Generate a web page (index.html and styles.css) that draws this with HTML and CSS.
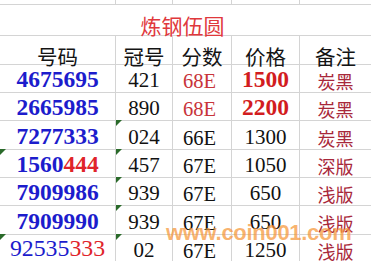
FILE: index.html
```html
<!DOCTYPE html>
<html lang="zh">
<head>
<meta charset="utf-8">
<title>炼钢伍圆</title>
<link rel="stylesheet" href="styles.css">
</head>
<body>
<div class="sheet">
  <div class="cell strip"></div><div class="cell strip"></div><div class="cell strip"></div><div class="cell strip"></div><div class="cell strip last"></div>

  <div class="cell title">炼钢伍圆</div>

  <div class="cell head">号码</div><div class="cell head">冠号</div><div class="cell head">分数</div><div class="cell head">价格</div><div class="cell head last">备注</div>

  <div class="cell num">4675695</div><div class="cell plain">421</div><div class="cell grade red">68E</div><div class="cell price hot">1500</div><div class="cell note last">炭黑</div>

  <div class="cell num">2665985</div><div class="cell plain">890</div><div class="cell grade red">68E</div><div class="cell price hot">2200</div><div class="cell note last">炭黑</div>

  <div class="cell num">7277333</div><div class="cell plain flag">024</div><div class="cell grade">66E</div><div class="cell price">1300</div><div class="cell note last">炭黑</div>

  <div class="cell num flag">1560<span class="hi">444</span></div><div class="cell plain flag">457</div><div class="cell grade">67E</div><div class="cell price">1050</div><div class="cell note last">深版</div>

  <div class="cell num">7909986</div><div class="cell plain flag">939</div><div class="cell grade">67E</div><div class="cell price">650</div><div class="cell note last">浅版</div>

  <div class="cell num">7909990</div><div class="cell plain flag">939</div><div class="cell grade">67E</div><div class="cell price">650</div><div class="cell note last">浅版</div>

  <div class="cell num thin flag end">92535<span class="hi">333</span></div><div class="cell plain flag end">02</div><div class="cell grade end">67E</div><div class="cell price end">1250</div><div class="cell note last end">浅版</div>

  <div class="watermark">www.coin001.com</div>
</div>
</body>
</html>
```
FILE: styles.css
```css
html, body {
  margin: 0;
  padding: 0;
  background: #ffffff;
}

.sheet {
  position: relative;
  width: 371px;
  height: 261px;
  overflow: hidden;
  display: grid;
  grid-template-columns: 116px 57px 59px 68px 71px;
  grid-template-rows: 5px 31px 29px 28px 28px 29px 28px 28px 29px 26px;
  font-family: "Liberation Serif", "Noto Sans CJK SC", serif;
  color: #111111;
}

.cell {
  position: relative;
  box-sizing: border-box;
  border-right: 1px solid #d4d4d4;
  border-bottom: 1px solid #d4d4d4;
  display: flex;
  align-items: flex-end;
  justify-content: center;
  white-space: nowrap;
  line-height: 1;
  padding-bottom: 1px;
}

.cell.last {
  border-right: none;
}

.strip {
  padding: 0;
}

.title {
  grid-column: 1 / 6;
  border-right: none;
  font-family: "Noto Sans CJK SC", sans-serif;
  font-size: 21px;
  line-height: 0.9;
  color: #e0383c;
  padding-bottom: 0;
  padding-right: 6px;
}

.head {
  font-family: "Noto Sans CJK SC", sans-serif;
  font-size: 20.5px;
  line-height: 0.8;
  color: #141414;
  padding-bottom: 0;
}

.num {
  font-size: 23.5px;
  font-weight: bold;
  color: #1c1ccc;
}

.num.thin {
  font-weight: normal;
  font-size: 23.8px;
}

.hi {
  color: #e0242a;
}

.plain {
  font-size: 21px;
}

.grade {
  font-size: 20.5px;
  justify-content: flex-start;
  padding-left: 10px;
}

.grade.red {
  color: #c8343a;
}

.price {
  font-size: 21px;
}

.price.hot {
  font-size: 23.5px;
  font-weight: bold;
  color: #d21c20;
}

.note {
  font-family: "Noto Sans CJK SC", sans-serif;
  font-size: 18px;
  color: #a8283a;
  padding-bottom: 2px;
}

.cell.end {
  border-bottom: none;
  padding-bottom: 0;
}

.note.end {
  padding-bottom: 1px;
}

.flag::before {
  content: "";
  position: absolute;
  left: 0;
  top: -1px;
  width: 0;
  height: 0;
  border-top: 6px solid #2a6a2a;
  border-right: 6px solid transparent;
}

.watermark {
  position: absolute;
  left: 166px;
  top: 222px;
  font-family: "Liberation Sans", sans-serif;
  font-weight: bold;
  font-size: 22px;
  letter-spacing: -0.3px;
  color: rgba(246, 150, 56, 0.72);
  line-height: 1;
  pointer-events: none;
}
```
